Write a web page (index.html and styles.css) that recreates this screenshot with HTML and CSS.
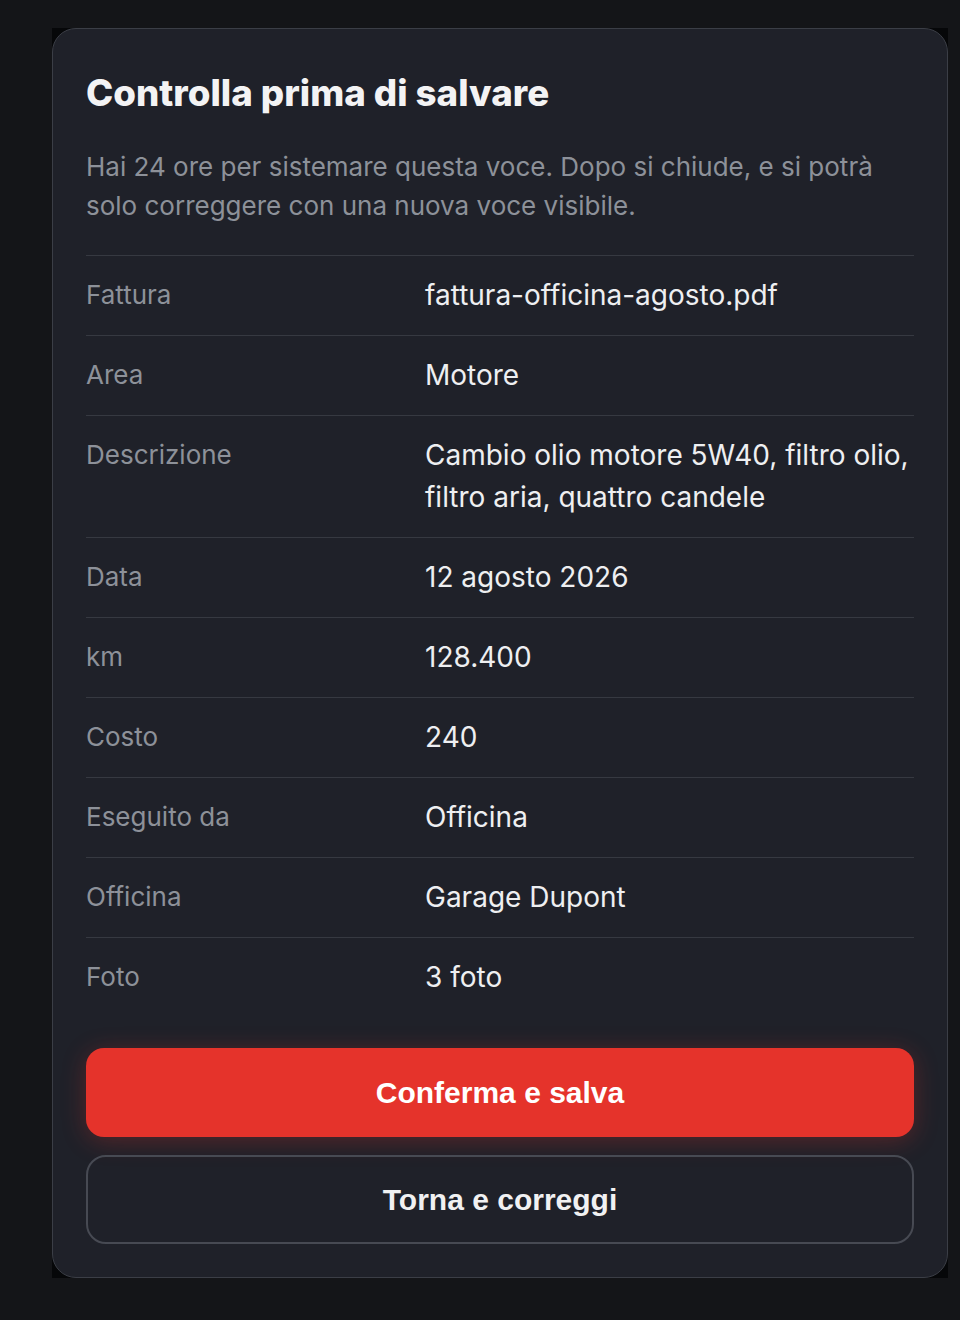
FILE: index.html
```html
<!DOCTYPE html>
<html lang="it">
<head>
<meta charset="utf-8">
<title>Controlla prima di salvare</title>
<link rel="stylesheet" href="styles.css">
</head>
<body>
<div class="frame">
  <section class="card">
    <h1 class="title">Controlla prima di salvare</h1>
    <p class="lead">Hai 24 ore per sistemare questa voce. Dopo si chiude, e si potrà solo correggere con una nuova voce visibile.</p>
    <dl class="summary">
      <div class="row"><dt>Fattura</dt><dd>fattura-officina-agosto.pdf</dd></div>
      <div class="row"><dt>Area</dt><dd>Motore</dd></div>
      <div class="row"><dt>Descrizione</dt><dd>Cambio olio motore 5W40, filtro olio, filtro aria, quattro candele</dd></div>
      <div class="row"><dt>Data</dt><dd>12 agosto 2026</dd></div>
      <div class="row"><dt>km</dt><dd>128.400</dd></div>
      <div class="row"><dt>Costo</dt><dd>240</dd></div>
      <div class="row"><dt>Eseguito da</dt><dd>Officina</dd></div>
      <div class="row"><dt>Officina</dt><dd>Garage Dupont</dd></div>
      <div class="row"><dt>Foto</dt><dd>3 foto</dd></div>
    </dl>
    <div class="actions">
      <button class="btn btn-primary" type="button">Conferma e salva</button>
      <button class="btn btn-secondary" type="button">Torna e correggi</button>
    </div>
  </section>
</div>
</body>
</html>
```

FILE: styles.css
```css
html, body {
  margin: 0;
  padding: 0;
}
body {
  background: #141518;
  min-height: 1320px;
  font-family: Inter, "Liberation Sans", sans-serif;
}
.frame {
  margin: 28px 12px 0 52px;
  width: 896px;
  background: #060709;
}
.card {
  box-sizing: border-box;
  width: 896px;
  height: 1250px;
  background: #1f2129;
  border: 1px solid #3b3e46;
  border-radius: 24px;
  padding: 40px 33px 33px;
  display: flex;
  flex-direction: column;
}
.title {
  margin: 0;
  font-family: Inter, sans-serif;
  font-weight: 800;
  font-size: 36.7px;
  line-height: 48px;
  letter-spacing: 0;
  color: #f3f3f4;
}
.lead {
  margin: 30px 0 0;
  font-size: 26px;
  line-height: 39px;
  color: #8d9199;
}
.summary {
  margin: 30px 0 0;
  border-top: 1px solid #363941;
}
.row {
  display: grid;
  grid-template-columns: 339px 1fr;
  border-bottom: 1px solid #363941;
  padding: 18px 0 19px;
}
.row:last-child {
  border-bottom: none;
}
.row dt {
  font-size: 26px;
  line-height: 42px;
  color: #8d9199;
}
.row dd {
  margin: 0;
  font-size: 28px;
  line-height: 42px;
  color: #eeeff1;
}
.actions {
  margin-top: auto;
  display: flex;
  flex-direction: column;
  gap: 18px;
}
.btn {
  display: block;
  width: 100%;
  font-family: "Liberation Sans", Arial, sans-serif;
  font-weight: 700;
  font-size: 30px;
  cursor: pointer;
}
.btn-primary {
  height: 89px;
  border: none;
  border-radius: 18px;
  background: #e5332b;
  color: #ffffff;
  box-shadow: 0 4px 24px rgba(229, 51, 43, 0.28);
}
.btn-secondary {
  height: 89px;
  border: 2px solid #474a53;
  border-radius: 20px;
  background: transparent;
  color: #f1f1f2;
}
```
